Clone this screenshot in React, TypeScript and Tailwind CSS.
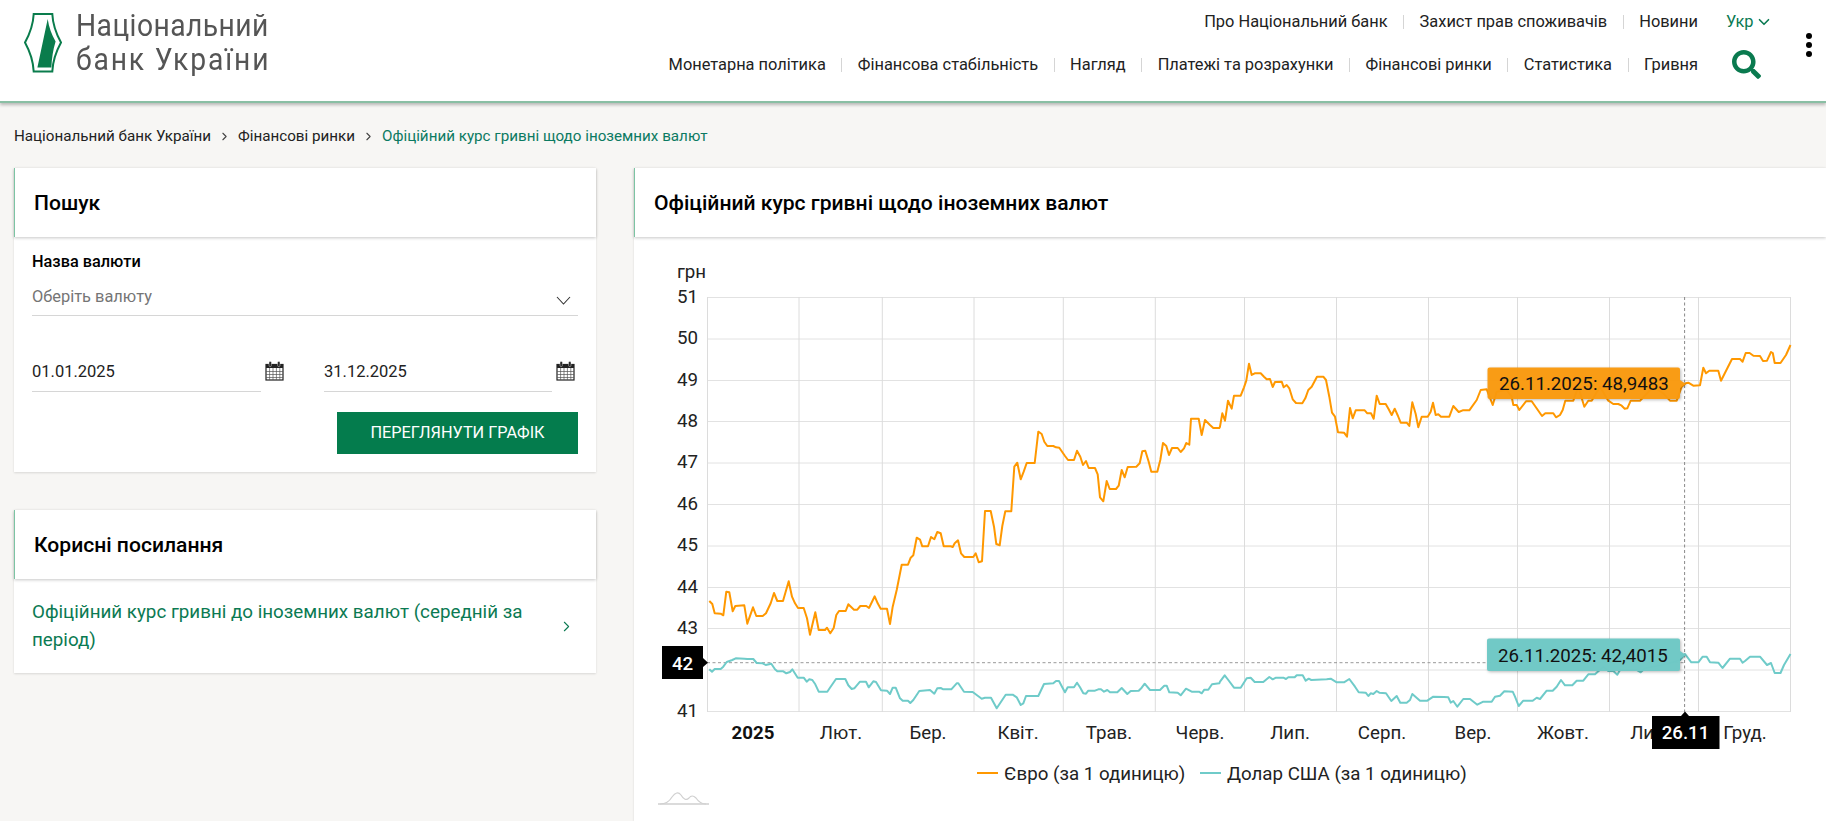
import { ChevronDown, ChevronRight } from "lucide-react";
import { FaSearch } from "react-icons/fa";

type Pt = [number, number];

// points were read off 3x crops, so map them back to page coordinates
const crop = (pts: Pt[], ox: number, oy: number, sx = 3, sy = 3) =>
  pts.map(([x, y]) => `${(x / sx + ox).toFixed(1)},${(y / sy + oy).toFixed(1)}`).join(" ");

const euroA: Pt[] = [
  [28, 543], [37, 552], [44, 580], [62, 581], [70, 586], [79, 515], [88, 517], [98, 574], [106, 558], [133, 556],
  [142, 611], [159, 562], [169, 588], [188, 588], [198, 580], [212, 550], [222, 519], [232, 543], [249, 543], [266, 484],
  [276, 530], [285, 550], [294, 564], [311, 564], [321, 595], [330, 644], [346, 577], [356, 630], [375, 630], [381, 623],
  [391, 640], [401, 624], [409, 585], [417, 573], [437, 573], [445, 553], [462, 569], [472, 569], [481, 558], [499, 558],
  [507, 564], [524, 529], [533, 550], [542, 566], [561, 566], [570, 612], [578, 560], [590, 510], [605, 434], [624, 434],
  [632, 413], [640, 406], [650, 353], [660, 359], [667, 379], [684, 379], [693, 351], [703, 358], [712, 336], [722, 340],
  [731, 379], [752, 379], [758, 381], [764, 370], [774, 361], [783, 400], [793, 411], [820, 411], [827, 400], [836, 427],
  [846, 424], [855, 273], [872, 273], [882, 320], [889, 372], [899, 376], [907, 318], [916, 274], [934, 274], [943, 140],
  [952, 128], [962, 178], [971, 155], [980, 129], [1004, 129], [1015, 35], [1025, 42], [1033, 65], [1042, 78], [1060, 78],
  [1068, 82], [1078, 83], [1095, 108], [1104, 120], [1122, 120], [1131, 92], [1141, 110], [1149, 135], [1158, 123], [1166, 144],
  [1185, 144], [1193, 163], [1200, 232], [1210, 244], [1220, 183], [1229, 207], [1248, 207], [1256, 197], [1265, 150], [1274, 172],
  [1283, 141], [1309, 140], [1319, 130], [1327, 94], [1336, 92], [1346, 125], [1354, 155], [1372, 155], [1381, 120], [1389, 69],
  [1399, 78], [1407, 105], [1416, 84], [1433, 84], [1442, 96], [1452, 85], [1459, 69], [1468, 74], [1473, -4], [1496, -4],
  [1505, 45], [1515, 0], [1530, 15], [1540, 24], [1558, 24],
];
const euroB: Pt[] = [
  [0, 290], [7, 250], [15, 272], [24, 212], [35, 236], [42, 197], [62, 197], [72, 172], [79, 152], [87, 101],
  [95, 135], [104, 130], [122, 130], [132, 140], [140, 148], [150, 147], [158, 171], [165, 156], [185, 155], [191, 172],
  [200, 165], [208, 175], [218, 208], [228, 219], [247, 220], [256, 205], [265, 180], [275, 170], [291, 140], [310, 140],
  [318, 150], [328, 200], [336, 248], [345, 260], [354, 307], [372, 308], [381, 320], [390, 234], [398, 265], [407, 241],
  [434, 241], [442, 250], [453, 250], [461, 266], [470, 197], [479, 222], [497, 222], [506, 238], [515, 255], [524, 236],
  [534, 258], [542, 278], [560, 278], [568, 288], [577, 217], [587, 252], [595, 292], [605, 260], [623, 260], [632, 245],
  [639, 218], [647, 255], [655, 253], [663, 260], [688, 260], [700, 228], [716, 246], [728, 241], [748, 241], [770, 210],
  [782, 180], [800, 178], [818, 225], [830, 185], [860, 180], [875, 200], [880, 225], [890, 225], [898, 240], [918, 214],
  [935, 214], [966, 258], [976, 250], [1000, 250], [1008, 262], [1020, 255], [1028, 240], [1036, 212], [1060, 212], [1075, 170],
  [1093, 230], [1105, 212], [1115, 212], [1140, 170], [1165, 212], [1180, 222], [1195, 222], [1205, 227], [1214, 236], [1222, 235],
  [1232, 212], [1260, 212], [1300, 170], [1330, 190], [1350, 212], [1370, 212], [1385, 170], [1397, 160], [1405, 158], [1420, 167],
  [1440, 166], [1450, 113], [1458, 130], [1468, 122], [1495, 122], [1503, 152],
];
const euroC: Pt[] = [
  [1732, 359], [1740, 359], [1742.6, 361.7], [1745.7, 353], [1749.6, 353], [1753.4, 355.7], [1760, 356], [1763, 361], [1767, 360.7],
  [1771, 352], [1772.8, 353], [1774.7, 363], [1780.5, 363], [1786, 355], [1790.5, 345],
];
const usdA: Pt[] = [
  [28, 58], [36, 65], [44, 57], [62, 57], [70, 50], [80, 36], [97, 30], [107, 25], [133, 26], [142, 27],
  [160, 27], [170, 39], [188, 40], [197, 45], [214, 41], [225, 58], [232, 64], [250, 64], [259, 70], [270, 66],
  [277, 58], [293, 83], [311, 83], [320, 95], [328, 88], [337, 90], [346, 103], [356, 125], [382, 125], [391, 112],
  [408, 87], [436, 87], [445, 106], [455, 117], [463, 115], [480, 95], [498, 95], [506, 112], [520, 94], [528, 96],
  [543, 121], [561, 122], [570, 132], [578, 113], [587, 113], [600, 145], [608, 152], [624, 152], [631, 159], [640, 150],
  [658, 123], [690, 120], [703, 131], [712, 115], [722, 114], [730, 118], [754, 118], [770, 100], [775, 100], [792, 125],
  [818, 126], [845, 146], [855, 143], [873, 143], [890, 175], [917, 134], [938, 134], [950, 142], [962, 165], [970, 160],
  [978, 138], [1015, 138], [1032, 102], [1060, 100], [1068, 93], [1077, 93], [1086, 110], [1095, 127], [1103, 112], [1122, 112],
  [1131, 98], [1140, 112], [1150, 130], [1158, 131], [1165, 122], [1185, 122], [1195, 118], [1203, 118], [1212, 125], [1222, 120],
  [1230, 127], [1252, 127], [1265, 114], [1282, 132], [1292, 123], [1316, 122], [1325, 113], [1334, 101], [1350, 120], [1380, 120],
  [1393, 107], [1400, 107], [1408, 127], [1433, 128], [1442, 136], [1458, 116], [1475, 125], [1497, 125], [1505, 130], [1513, 119],
  [1525, 119], [1536, 103], [1558, 100],
];
const usdB: Pt[] = [
  [0, 125], [14, 106], [25, 120], [42, 143], [62, 143], [80, 115], [92, 113], [104, 126], [130, 126], [148, 111],
  [158, 118], [168, 113], [190, 113], [198, 117], [205, 112], [224, 112], [230, 106], [248, 106], [257, 122], [266, 116],
  [274, 120], [320, 118], [332, 116], [350, 127], [372, 127], [388, 117], [405, 140], [416, 157], [437, 158], [445, 168],
  [452, 160], [460, 162], [470, 153], [478, 158], [498, 160], [514, 183], [530, 168], [541, 188], [560, 188], [570, 180],
  [577, 162], [600, 182], [622, 182], [640, 170], [672, 171], [685, 172], [692, 188], [700, 183], [712, 200], [730, 177],
  [750, 177], [772, 194], [790, 185], [815, 185], [825, 170], [840, 167], [853, 154], [878, 155], [885, 170], [896, 198],
  [910, 182], [938, 182], [950, 173], [960, 177], [980, 152], [998, 152], [1010, 140], [1023, 120], [1035, 136], [1057, 136],
  [1070, 122], [1090, 122], [1105, 103], [1125, 103], [1150, 80], [1165, 93], [1180, 93], [1192, 104], [1200, 90], [1250, 90],
  [1262, 97], [1275, 85], [1340, 72], [1380, 60], [1395, 42], [1414, 67], [1435, 67], [1448, 50], [1460, 50], [1470, 67],
  [1495, 68],
];
const usdC: Pt[] = [
  [1722.5, 668], [1730, 658.7], [1740, 658.7], [1742.6, 662.7], [1745, 661], [1750, 656.7], [1760, 656.7], [1767, 665], [1771, 663],
  [1774.7, 673], [1780.5, 673], [1784, 665], [1790.5, 654],
];

const euroLine = [crop(euroA, 700, 420), crop(euroB, 1220, 330), crop(euroC, 0, 0, 1, 1)].join(" ");
const usdLine = [crop(usdA, 700, 650), crop(usdB, 1220, 640), crop(usdC, 0, 0, 1, 1)].join(" ");

const hGrid: [number, number][] = [
  [51, 297.5], [50, 339], [49, 380.5], [48, 421.5], [47, 463], [46, 504.5], [45, 546], [44, 587.5], [43, 628.5], [42, 670], [41, 711.5],
];
const vGrid = [707.5, 799, 882.3, 974, 1063.3, 1155.3, 1244.5, 1336.5, 1428.5, 1517.5, 1609.5, 1698.5, 1790.5];
const months: [string, number][] = [
  ["Лют.", 841], ["Бер.", 928], ["Квіт.", 1018], ["Трав.", 1109], ["Черв.", 1200], ["Лип.", 1290], ["Серп.", 1382],
  ["Вер.", 1473], ["Жовт.", 1563], ["Лист.", 1654], ["Груд.", 1745],
];

function NbuLogo() {
  return (
    <svg width="38" height="62" viewBox="23 11 38 62" className="shrink-0">
      <path
        d="M32.7 13 L51.3 13 Q52 27 60 41.5 Q52 56 51.3 70.5 L32.7 70.5 Q32 56 24 41.5 Q32 27 32.7 13 Z"
        fill="#fff"
        stroke="#0a7c4c"
        strokeWidth="2"
      />
      <path d="M46.7 18 Q48.5 30 54.6 40.5 Q50.8 53 50.4 66.5 L36.4 66.5 Z" fill="#0a7c4c" />
    </svg>
  );
}

function CalendarIcon() {
  return (
    <svg width="19" height="20" viewBox="0 0 19 20" className="shrink-0">
      <rect x="1" y="3.5" width="17" height="15.5" fill="#fff" stroke="#222" strokeWidth="1.2" />
      <rect x="1" y="3.5" width="17" height="3.5" fill="#222" />
      <path d="M1 10.5h17M1 13.5h17M1 16.5h17M4.6 7v12M8 7v12M11.4 7v12M14.8 7v12" stroke="#555" strokeWidth="0.7" />
      <rect x="4" y="0.5" width="2.4" height="5" rx="1" fill="#222" stroke="#fff" strokeWidth="0.4" />
      <rect x="12.6" y="0.5" width="2.4" height="5" rx="1" fill="#222" stroke="#fff" strokeWidth="0.4" />
    </svg>
  );
}

function NavRow({ items }: { items: string[] }) {
  return (
    <div className="flex items-center justify-end">
      {items.map((item, i) => (
        <div key={item} className="flex items-center">
          {i > 0 && <span className="mx-[15.5px] h-[14px] w-px bg-[#d5d5d5]" />}
          <a className="whitespace-nowrap text-[16.4px] leading-5 text-[#222]">{item}</a>
        </div>
      ))}
    </div>
  );
}

function CardHeader({ title }: { title: string }) {
  return (
    <div className="flex h-[69px] items-center border-l border-[#7cc4a3] bg-white pl-[19px] pt-[1px] text-[21.1px] font-medium text-black shadow-[0_1px_3px_rgba(0,0,0,0.22)]">
      {title}
    </div>
  );
}

function Chart() {
  return (
    <svg width="1192" height="584" viewBox="634 237 1192 584" className="block">
      {hGrid.map(([v, y]) => (
        <line key={v} x1="707" x2="1791" y1={y} y2={y} stroke="#e2e2e2" strokeWidth="1" />
      ))}
      {vGrid.map((x) => (
        <line key={x} x1={x} x2={x} y1="297" y2="712" stroke="#dcdcdc" strokeWidth="1" />
      ))}

      <line x1="707" x2="1684" y1="662.7" y2="662.7" stroke="#999" strokeWidth="1" strokeDasharray="3 2.5" />
      <line x1="1684.6" x2="1684.6" y1="297" y2="712" stroke="#888" strokeWidth="1" strokeDasharray="3 2.5" />

      <polyline points={euroLine} fill="none" stroke="#ff9800" strokeWidth="2" strokeLinejoin="round" />
      <polyline points={usdLine} fill="none" stroke="#6fcbc9" strokeWidth="2" strokeLinejoin="round" />

      <g fontSize="18.7" fill="#222">
        <text x="677" y="278">грн</text>
        {hGrid.map(([v, y]) => (
          <text key={v} x="677" y={y + 5}>{v}</text>
        ))}
        <text x="753" y="738.5" textAnchor="middle" fontWeight="700" fill="#111">2025</text>
        {months.map(([m, x]) => (
          <text key={m} x={x} y="738.5" textAnchor="middle">{m}</text>
        ))}
        <text x="1004" y="779.5">Євро (за 1 одиницю)</text>
        <text x="1227" y="779.5">Долар США (за 1 одиницю)</text>
      </g>
      <line x1="977" x2="998" y1="773" y2="773" stroke="#ff9800" strokeWidth="2" />
      <line x1="1200" x2="1221" y1="773" y2="773" stroke="#6fcbc9" strokeWidth="2" />

      {/* range selector stub under the plot */}
      <path d="M658 804 H709" stroke="#cfcfcf" strokeWidth="1.5" />
      <path d="M660 804 Q668 804 672 797 Q677 790 681 795 Q685 802 689 798 Q692 794 696 798 Q700 804 706 804" fill="none" stroke="#d0d0d0" strokeWidth="1.2" />

      <g className="[filter:drop-shadow(1px_1px_1.5px_rgba(0,0,0,0.28))]">
        <path d="M1489.5 367.5 H1678 a2 2 0 0 1 2 2 V380 L1686 384 L1680 388 V397 a2 2 0 0 1 -2 2 H1489.5 a2 2 0 0 1 -2 -2 V369.5 a2 2 0 0 1 2 -2 Z" fill="#fb9a0e" fillOpacity="0.96" />
      </g>
      <text x="1499" y="389.5" fontSize="18.7" fill="#111">26.11.2025: 48,9483</text>

      <g className="[filter:drop-shadow(1px_1px_1.5px_rgba(0,0,0,0.28))]">
        <path d="M1489 638.5 H1678 a2 2 0 0 1 2 2 V651 L1686 655 L1680 659 V669 a2 2 0 0 1 -2 2 H1489 a2 2 0 0 1 -2 -2 V640.5 a2 2 0 0 1 2 -2 Z" fill="#6fc9c6" fillOpacity="0.98" />
      </g>
      <text x="1498" y="661.5" fontSize="18.7" fill="#111">26.11.2025: 42,4015</text>

      <path d="M662 646 H703 V658 L708 662.7 L703 667 V679 H662 Z" fill="#000" />
      <text x="682.5" y="669.5" fontSize="18.7" fontWeight="500" fill="#fff" textAnchor="middle">42</text>

      <path d="M1652 716 H1681 L1685 711.5 L1689 716 H1719.5 V749 H1652 Z" fill="#000" />
      <text x="1685.5" y="739" fontSize="18.7" fontWeight="500" fill="#fff" textAnchor="middle">26.11</text>
    </svg>
  );
}

export default function App() {
  return (
    <div className="h-[821px] overflow-hidden bg-[#f7f6f4] font-['Roboto',sans-serif] text-[#222]">
      <header className="relative flex h-[103px] border-b-2 border-[#8abfa4] bg-white shadow-[0_2px_3px_rgba(0,0,0,0.25)]">
        <div className="flex pl-[24px] pt-[12px]">
          <NbuLogo />
          <div className="ml-[14px] origin-left scale-x-[0.883] text-[32px] leading-[34px] text-[#555]">
            <div className="-mt-[4px] whitespace-nowrap tracking-[0.5px]">Національний</div>
            <div className="whitespace-nowrap tracking-[2.1px]">банк України</div>
          </div>
        </div>

        <div className="ml-auto flex">
          <div className="flex flex-col pt-[12px]">
            <NavRow items={["Про Національний банк", "Захист прав споживачів", "Новини"]} />
            <div className="mt-[23px]">
              <NavRow items={["Монетарна політика", "Фінансова стабільність", "Нагляд", "Платежі та розрахунки", "Фінансові ринки", "Статистика", "Гривня"]} />
            </div>
          </div>
          <div className="ml-[28px] flex w-[45px] flex-col pt-[12px]">
            <div className="flex items-center whitespace-nowrap text-[16.4px] leading-5 text-[#0b7a52]">
              Укр
              <ChevronDown className="ml-[1px] h-[18px] w-[18px] shrink-0" strokeWidth={2.2} />
            </div>
            <FaSearch className="mt-[18px] ml-[6px] h-[29px] w-[29px] text-[#0a7a4f]" />
          </div>
          <div className="ml-[35px] mr-[14px] flex w-[6px] flex-col gap-[3px] pt-[33px]">
            <span className="h-[6px] w-[6px] rounded-full bg-black" />
            <span className="h-[6px] w-[6px] rounded-full bg-black" />
            <span className="h-[6px] w-[6px] rounded-full bg-black" />
          </div>
        </div>
      </header>

      <nav className="flex h-[65px] items-center pl-[14px] pt-[2px] text-[15.2px] text-[#222]">
        <a>Національний банк України</a>
        <ChevronRight className="mx-[7px] h-[13px] w-[13px] text-[#444]" />
        <a>Фінансові ринки</a>
        <ChevronRight className="mx-[7px] h-[13px] w-[13px] text-[#444]" />
        <a className="text-[#0b7a62]">Офіційний курс гривні щодо іноземних валют</a>
      </nav>

      <main className="flex items-start gap-[38px] pl-[14px]">
        <aside className="w-[582px] shrink-0">
          <section className="bg-white shadow-[0_1px_2px_rgba(0,0,0,0.12)]">
            <CardHeader title="Пошук" />
            <div className="px-[18px] pb-[18px] pt-[15px]">
              <label className="block text-[16.3px] font-medium leading-5 text-black">Назва валюти</label>
              <div className="mt-[8px] flex h-[36px] items-center justify-between border-b border-[#d6d6d6] pr-[7px]">
                <span className="-mt-[2px] text-[16.4px] leading-5 text-[#757575]">Оберіть валюту</span>
                <svg width="15" height="9" viewBox="0 0 15 9" className="mt-[5px]">
                  <path d="M1 1l6.5 7L14 1" fill="none" stroke="#333" strokeWidth="1.1" />
                </svg>
              </div>
              <div className="mt-[35px] flex gap-[40px]">
                <div className="flex w-[252px] items-start justify-between">
                  <div className="flex h-[41px] w-[229px] items-center border-b border-[#d6d6d6] pt-[3px] text-[16.5px] text-[#222]">01.01.2025</div>
                  <div className="mt-[10px]"><CalendarIcon /></div>
                </div>
                <div className="flex w-[251px] items-start justify-between">
                  <div className="flex h-[41px] w-[228px] items-center border-b border-[#d6d6d6] pt-[3px] text-[16.5px] text-[#222]">31.12.2025</div>
                  <div className="mt-[10px]"><CalendarIcon /></div>
                </div>
              </div>
              <div className="mt-[20px] flex justify-end">
                <button className="h-[42px] w-[241px] bg-[#047c4d] text-[16.3px] text-white">ПЕРЕГЛЯНУТИ ГРАФІК</button>
              </div>
            </div>
          </section>

          <section className="mt-[38px] bg-white shadow-[0_1px_2px_rgba(0,0,0,0.12)]">
            <CardHeader title="Корисні посилання" />
            <div className="flex items-center justify-between py-[19px] pl-[18px] pr-[21px]">
              <a className="w-[505px] text-[18.8px] leading-[28px] text-[#0b7a52]">
                Офіційний курс гривні до іноземних валют (середній за період)
              </a>
              <ChevronRight className="h-[17px] w-[17px] text-[#0b7a52]" strokeWidth={1.5} />
            </div>
          </section>
        </aside>

        <section className="min-w-0 flex-1 bg-white shadow-[0_1px_2px_rgba(0,0,0,0.12)]">
          <CardHeader title="Офіційний курс гривні щодо іноземних валют" />
          <Chart />
        </section>
      </main>
    </div>
  );
}
